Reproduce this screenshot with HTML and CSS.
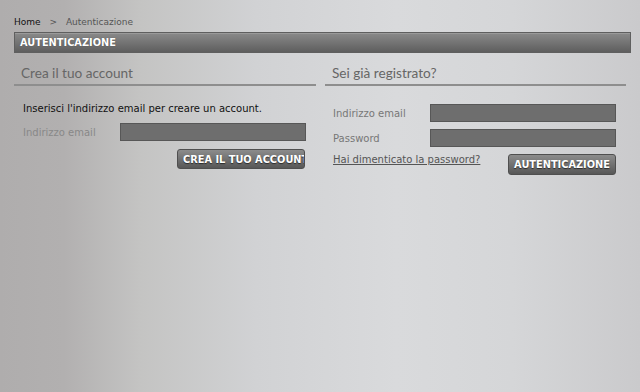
FILE: index.html
```html
<!DOCTYPE html>
<html lang="it">
<head>
    <meta charset="UTF-8">
    <title>Autenticazione</title>
    <link rel="stylesheet" href="styles.css">
</head>
<body>
    <div class="page">
        <div class="breadcrumb">
            <a class="crumb-home" href="#">Home</a>
            <span class="crumb-sep">&gt;</span>
            <span class="crumb-current">Autenticazione</span>
        </div>

        <h1 class="page-title">AUTENTICAZIONE</h1>

        <div class="columns">
            <!-- Crea account -->
            <form class="box">
                <h3 class="box-title">Crea il tuo account</h3>
                <p class="intro">Inserisci l'indirizzo email per creare un account.</p>
                <div class="field">
                    <label class="field-label">Indirizzo email</label>
                    <input class="field-input" type="text">
                </div>
                <div class="actions">
                    <button class="btn btn-create" type="button">CREA IL TUO ACCOUNT</button>
                </div>
            </form>

            <!-- Login -->
            <form class="box box-login">
                <h3 class="box-title">Sei già registrato?</h3>
                <div class="field">
                    <label class="field-label">Indirizzo email</label>
                    <input class="field-input" type="text">
                </div>
                <div class="field">
                    <label class="field-label">Password</label>
                    <input class="field-input" type="password">
                </div>
                <div class="actions actions-login">
                    <a class="forgot" href="#">Hai dimenticato la password?</a>
                    <button class="btn" type="button">AUTENTICAZIONE</button>
                </div>
            </form>
        </div>
    </div>
</body>
</html>
```

FILE: styles.css
```css
* {
    margin: 0;
    padding: 0;
    box-sizing: border-box;
}

html, body {
    height: 100%;
}

body {
    background: linear-gradient(to right, #afadad 0%, #b2b0b0 10%, #c4c4c3 22%, #d1d2d4 40%, #d9dadc 62%, #d5d6d8 80%, #cacacc 100%);
    font-family: 'DejaVu Sans', Verdana, sans-serif;
    color: #222;
    overflow: hidden;
}

.page {
    padding: 16px 9px 0 14px;
}

/* Breadcrumb */
.breadcrumb {
    font-size: 9px;
    color: #555;
    height: 16px;
    line-height: 12px;
}

.crumb-home {
    color: #111;
    text-decoration: none;
}

.crumb-sep {
    margin: 0 6px 0 6px;
}

/* Title bar */
.page-title {
    width: 617px;
    height: 21px;
    border: 1px solid #5f5f5f;
    background: linear-gradient(to bottom, #8a8a8a, #5e5e5e);
    box-shadow: inset 0 1px 0 rgba(255,255,255,0.15);
    color: #fff;
    font-size: 9.8px;
    font-weight: bold;
    line-height: 19px;
    padding-left: 5px;
    text-shadow: 0 0 1px rgba(0,0,0,0.4);
}

/* Columns */
.columns {
    display: flex;
    gap: 9px;
    margin-top: 10px;
}

.box {
    width: 302px;
}

.box-login {
    width: 301px;
}

.box-title {
    font-family: 'Lato', sans-serif;
    font-weight: normal;
    font-size: 13.6px;
    color: #666;
    height: 23px;
    line-height: 21px;
    padding-left: 7px;
    border-bottom: 2px solid #8e8e8e;
}

.intro {
    font-size: 10px;
    color: #111;
    padding-left: 9px;
    margin-top: 16px;
    height: 21px;
    line-height: 14px;
}

.field {
    display: flex;
    align-items: center;
    margin-bottom: 8px;
}

.field-label {
    font-size: 10px;
    color: #888;
    width: 106px;
    padding-left: 9px;
}

.box-login .field {
    margin-bottom: 7px;
}

.box-login .field-label {
    width: 105px;
    padding-left: 8px;
    color: #777;
}

.field-input {
    width: 186px;
    height: 18px;
    background: #6e6e6e;
    border: 1px solid #575757;
    outline: none;
}

.box-login .field:first-of-type {
    margin-top: 18px;
}

.actions {
    display: flex;
    justify-content: flex-end;
    padding-right: 11px;
}

.actions-login {
    justify-content: space-between;
    align-items: flex-start;
    padding-left: 8px;
    padding-right: 10px;
}

.btn {
    height: 21px;
    padding: 0 5px;
    border: 1px solid #4f4f4f;
    border-radius: 3px;
    background: linear-gradient(to bottom, #8c8c8c, #575757);
    color: #fff;
    font-family: 'DejaVu Sans', Verdana, sans-serif;
    font-size: 9.8px;
    font-weight: bold;
    text-shadow: 0 1px 1px rgba(0,0,0,0.6);
    white-space: nowrap;
    cursor: pointer;
}

.btn-create {
    width: 128px;
    height: 20px;
    overflow: hidden;
    text-align: left;
}

.forgot {
    font-size: 10px;
    color: #555;
    margin-top: 0;
}
```
